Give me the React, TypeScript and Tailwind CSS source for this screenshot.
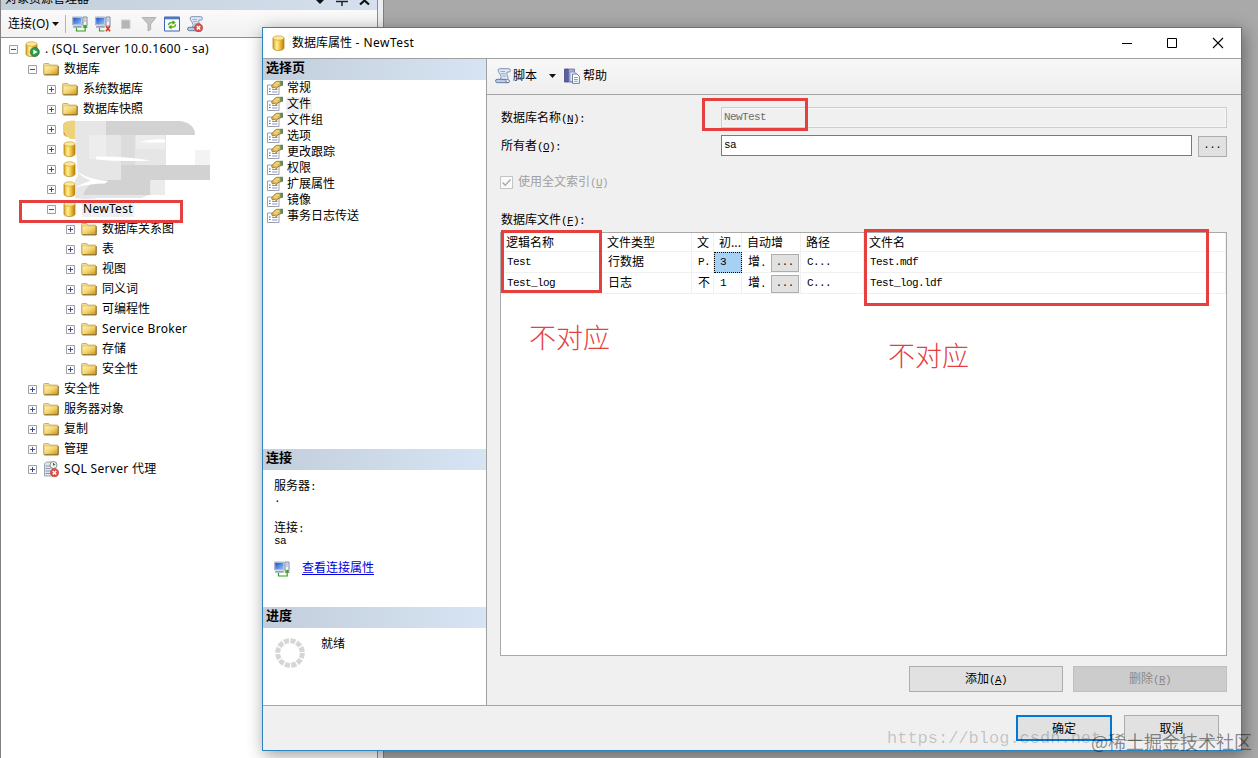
// App.tsx
import { Fragment } from 'react';
import type { ReactNode } from 'react';

type IconKind = 'server' | 'folder' | 'db' | 'agent';

interface TreeNode {
  label: string;
  level: number;
  icon: IconKind;
  open?: boolean;
  selected?: boolean;
}

interface FileRow {
  name: string;
  type: string;
  group: string;
  size: string;
  fileName: string;
  active?: boolean;
}

const TREE: TreeNode[] = [
  { label: '. (SQL Server 10.0.1600 - sa)', level: 0, icon: 'server', open: true },
  { label: '数据库', level: 1, icon: 'folder', open: true },
  { label: '系统数据库', level: 2, icon: 'folder' },
  { label: '数据库快照', level: 2, icon: 'folder' },
  { label: '', level: 2, icon: 'db' },
  { label: '', level: 2, icon: 'db' },
  { label: '', level: 2, icon: 'db' },
  { label: '', level: 2, icon: 'db' },
  { label: 'NewTest', level: 2, icon: 'db', open: true, selected: true },
  { label: '数据库关系图', level: 3, icon: 'folder' },
  { label: '表', level: 3, icon: 'folder' },
  { label: '视图', level: 3, icon: 'folder' },
  { label: '同义词', level: 3, icon: 'folder' },
  { label: '可编程性', level: 3, icon: 'folder' },
  { label: 'Service Broker', level: 3, icon: 'folder' },
  { label: '存储', level: 3, icon: 'folder' },
  { label: '安全性', level: 3, icon: 'folder' },
  { label: '安全性', level: 1, icon: 'folder' },
  { label: '服务器对象', level: 1, icon: 'folder' },
  { label: '复制', level: 1, icon: 'folder' },
  { label: '管理', level: 1, icon: 'folder' },
  { label: 'SQL Server 代理', level: 1, icon: 'agent' },
];

const INDENT = ['pl-2', 'pl-[27px]', 'pl-[46px]', 'pl-[65px]'];

const PAGES = ['常规', '文件', '文件组', '选项', '更改跟踪', '权限', '扩展属性', '镜像', '事务日志传送'];

const FILES: FileRow[] = [
  { name: 'Test', type: '行数据', group: 'P.', size: '3', fileName: 'Test.mdf', active: true },
  { name: 'Test_log', type: '日志', group: '不', size: '1', fileName: 'Test_log.ldf' },
];

const COLUMNS = 'grid grid-cols-[101px_90px_22px_28px_59px_63px_344px_1fr]';
const UI_FONT = "font-['Noto_Sans','Noto_Sans_CJK_SC',sans-serif]";
const MONO_FONT = "font-['Liberation_Mono','Noto_Sans_CJK_SC',monospace]";
const LATIN = 'text-[11px] tracking-[-0.6px]';

/* アイコン */
const Gradients = () => (
  <svg className="absolute w-0 h-0">
    <defs>
      <linearGradient id="gold" x1="0" x2="1">
        <stop offset="0" stopColor="#d9a520" />
        <stop offset="0.35" stopColor="#fff0a0" />
        <stop offset="0.65" stopColor="#efbf35" />
        <stop offset="1" stopColor="#b87a08" />
      </linearGradient>
      <linearGradient id="folder" x1="0" y1="0" x2="1" y2="1">
        <stop offset="0" stopColor="#fdf3b8" />
        <stop offset="0.5" stopColor="#f3d46c" />
        <stop offset="1" stopColor="#d08e14" />
      </linearGradient>
      <linearGradient id="screen" x1="0" y1="0" x2="1" y2="1">
        <stop offset="0" stopColor="#1f4fc4" />
        <stop offset="1" stopColor="#8fc2ff" />
      </linearGradient>
    </defs>
  </svg>
);

const Cylinder = () => (
  <g>
    <path d="M2 3v10c0 1.400 2.200 2.500 5.500 2.500s5.500-1.100 5.500-2.500V3z" fill="url(#gold)" stroke="#b98a1c" strokeWidth="0.8" />
    <ellipse cx="7.5" cy="3" rx="5.500" ry="2.200" fill="#fbe79a" stroke="#d3a83a" strokeWidth="0.8" />
  </g>
);

const RedCross = () => (
  <g>
    <circle cx="11.5" cy="11.8" r="4.2" fill="#d8504c" stroke="#b83a3a" strokeWidth="0.6" />
    <path d="M9.8 10.1l3.4 3.4M13.2 10.1l-3.4 3.4" stroke="#fff" strokeWidth="1.4" />
  </g>
);

const DbIcon = ({ className = 'w-4 h-4' }: { className?: string }) => (
  <svg viewBox="0 0 16 16" className={className}><Cylinder /></svg>
);

const FolderIcon = () => (
  <svg viewBox="0 0 16 16" className="w-4 h-4">
    <path d="M.6 13.2V3.4q0-.9.9-.9h4.2l1.3 1.600h7.400v9.100z" fill="#f3dc90" stroke="#bda25a" strokeWidth="0.8" />
    <path d="M1.200 5h13.900v8.600H1.200z" fill="url(#folder)" stroke="#d3ad55" strokeWidth="0.5" />
    <path d="M15.200 5v8.900H1.400" fill="none" stroke="#6e5214" strokeWidth="0.9" />
  </svg>
);

const ServerIcon = () => (
  <svg viewBox="0 0 16 16" className="w-4 h-4">
    <Cylinder />
    <circle cx="10.8" cy="11" r="4.6" fill="#2f9a4a" stroke="#1f6d35" strokeWidth="0.6" />
    <path d="M9.3 8.4v5.2l4.2-2.6z" fill="#fff" />
  </svg>
);

const AgentIcon = () => (
  <svg viewBox="0 0 16 16" className="w-4 h-4">
    <path d="M1.500 2.500l2-1.500h6v13l-1.500 1H1.500z" fill="#dfe5ec" stroke="#8793a2" strokeWidth="0.8" />
    <path d="M2.500 5h5M2.500 7.500h5M2.500 10h5M2.500 12.500h5" stroke="#8793a2" strokeWidth="0.9" />
    <circle cx="10.500" cy="4" r="3.500" fill="#eef5f2" stroke="#777" strokeWidth="0.8" />
    <path d="M10.500 2v2.200l1.800-1" fill="none" stroke="#364" strokeWidth="1" />
    <RedCross />
  </svg>
);

const ConnectIcon = ({ off = false }: { off?: boolean }) => (
  <svg viewBox="0 0 16 16" className="w-4 h-4">
    <path d="M.5 1h9.500v8H.5z" fill="#dfe6f0" stroke="#9aa7ba" strokeWidth="0.8" />
    <path d="M1.200 1.800h8v6.500h-8z" fill="url(#screen)" />
    <path d="M1.500 10h8.500l-.5 1.800H.8z" fill="#93a3bd" />
    <path d="M11 1h4v9h-4z" fill="#f3f5f8" stroke="#6e7c94" strokeWidth="0.9" />
    <path d="M12 3h2M12 5h2" stroke="#8a96aa" strokeWidth="0.8" />
    <path d={off ? 'M4.500 12v3h5' : 'M4.500 12v3h8.700v-4'} fill="none" stroke="#35a01c" strokeWidth="1.2" />
    {off
      ? <path d="M11 10.300l4 5M15 10.300l-4 5" stroke="#e0301c" strokeWidth="1.6" />
      : <path d="M10.500 11.800l2.700-3.400 2.700 3.400z" fill="#35a01c" />}
  </svg>
);

const ScrollIcon = ({ stopped = false }: { stopped?: boolean }) => (
  <svg viewBox="0 0 16 16" className="w-4 h-4">
    <path d="M4.500.7h9q2 0 2 1.600t-1.500 1.700h-2q-.8 1.500.4 3.500 1 2 .4 4H5.500Q7 8.500 5 6 2.800 3.500 3.200 2 3.500.7 4.500.7z" fill="#dfe8f5" stroke="#7488ae" strokeWidth="0.9" />
    <path d="M2 11.300h8.500q.3 3.400 2.500 3.400H2.500Q.6 14.700.6 13t1.400-1.700z" fill="#bccbe4" stroke="#5a6f9b" strokeWidth="0.9" />
    <path d="M12.800 11.500q1.700.2 1.700 1.700t-1.500 1.500" fill="none" stroke="#5a6f9b" strokeWidth="0.9" />
    <path d="M5.500 3.500h4.500M6.200 5.700h4.500M7.200 8h4" stroke="#8da0c6" strokeWidth="0.9" />
    {stopped && <RedCross />}
  </svg>
);

const RefreshIcon = () => (
  <svg viewBox="0 0 16 16" className="w-4 h-4">
    <path d="M.5 1h15v14H.5z" fill="#f7fbff" stroke="#3d62ac" />
    <path d="M.5 1h15v2.300H.5z" fill="#4d78c8" />
    <path d="M4.500 9.300q0-2.800 3.500-2.800h1.500M11.500 8.300q0 2.800-3.500 2.800H6.500" fill="none" stroke="#5fae14" strokeWidth="1.500" />
    <path d="M8.500 4.200l3.200 2.300-3.200 2.300zM7.500 8.800l-3.200 2.300 3.200 2.300z" fill="#4fa012" />
  </svg>
);

const HelpIcon = () => (
  <svg viewBox="0 0 16 16" className="w-4 h-4">
    <path d="M.5 1h4v13h-4z" fill="#5b5da6" stroke="#43467f" strokeWidth="0.8" />
    <path d="M4.500 1h6v13h-6z" fill="#a9aed8" stroke="#5b5f99" strokeWidth="0.7" />
    <path d="M6 4h4.500l2 2v7.500H6z" fill="#eaf0fa" stroke="#7584a8" strokeWidth="0.8" />
    <path d="M8.500 6h4.500l2.400 2.400v7H8.500z" fill="#fff" stroke="#4c5f8d" strokeWidth="0.8" />
    <path d="M10 9.500h3.800M10 11.500h3.800M10 13.300h3.800" stroke="#6d86bd" strokeWidth="0.8" />
  </svg>
);

const PageIcon = () => (
  <svg viewBox="0 0 16 16" className="w-4 h-4">
    <path d="M.5 5h11.500v9.500H.5z" fill="#fff" stroke="#8b95aa" strokeWidth="0.9" />
    <path d="M2 9h1.500M2 11.500h1.500" stroke="#3355a0" />
    <path d="M5 9.500h5.500M5 12h5.500" stroke="#8d94b0" />
    <path d="M4.500 6l3.500-3.800q1-.9 2.500-.9H14v4.500L11 6.500 9.500 8.800 7.500 7.500 5.500 8z" fill="#dfb84c" stroke="#7d651d" strokeWidth="0.7" />
    <path d="M8.500 3h3.500M7 5h3.500" stroke="#fff0a8" strokeWidth="0.9" />
    <path d="M13.500.8H16v5h-2.500z" fill="#5a8a63" />
  </svg>
);

const Spinner = () => (
  <svg viewBox="0 0 32 32" className="w-8 h-8">
    <circle cx="16" cy="16" r="12.300" fill="none" stroke="#d6d6d6" strokeWidth="5" strokeDasharray="5.040 1.400" />
  </svg>
);

const NODE_ICONS: Record<IconKind, ReactNode> = {
  server: <ServerIcon />,
  folder: <FolderIcon />,
  db: <DbIcon />,
  agent: <AgentIcon />,
};

const Expander = ({ open }: { open?: boolean }) => (
  <svg viewBox="0 0 9 9" className="w-[9px] h-[9px] shrink-0">
    <path d="M.5.5h8v8h-8z" fill="#fafafa" stroke="#a0a0a0" />
    <path d={open ? 'M2 4.500h5' : 'M2 4.500h5M4.500 2v5'} stroke="#3b4c94" />
  </svg>
);

const Caret = () => (
  <svg viewBox="0 0 7 4" className="w-[7px] h-1"><path d="M0 0h7L3.500 4z" fill="#111" /></svg>
);

/* 対象エクスプローラー */
const ObjectExplorer = () => (
  <aside className={`w-[384px] h-full flex bg-[#eceef1] border-l border-[#808080] border-r-[#808080] border-r ${UI_FONT}`}>
    <div className="w-[377px] flex flex-col border-r border-[#8a8d92] bg-white">
      <div className="h-[10px] overflow-hidden bg-gradient-to-r from-[#c3cedb] to-[#d5e0ee] flex justify-between pr-[6px]">
        <span className="text-xs leading-[16px] -mt-[9px] ml-1">对象资源管理器</span>
        <svg viewBox="0 0 56 10" className="w-14 h-[10px]">
          <path d="M1 0h8L5 4z" fill="#111" />
          <path d="M21 1.500h12M27 1v5" stroke="#222" strokeWidth="1.500" />
          <path d="M45 4.500l9-8M54 4.500l-9-8" stroke="#111" strokeWidth="2.200" />
        </svg>
      </div>
      <div className="h-7 flex items-center border-b border-[#8f8f8f] bg-gradient-to-b from-[#fafafa] to-[#f1f1f1] pl-[7px]">
        <span className="text-xs whitespace-nowrap w-11 tracking-[0.1px]">连接(O)</span>
        <Caret />
        <span className="w-px h-[18px] bg-[#b5b5b5] ml-[6px] mr-[6px]" />
        <div className="flex gap-[7px]">
          <ConnectIcon />
          <ConnectIcon off />
          <svg viewBox="0 0 16 16" className="w-4 h-4"><path d="M3.500 4h8.500v8.500H3.500z" fill="#b5b5b5" stroke="#cfcfcf" /></svg>
          <svg viewBox="0 0 16 16" className="w-4 h-4"><path d="M1 1.500h14L9.700 8v5.500L7 15V8z" fill="#c4c4c4" stroke="#aaa" strokeWidth="0.8" /></svg>
          <RefreshIcon />
          <ScrollIcon stopped />
        </div>
      </div>
      <div className="relative flex-1 pt-px">
        {TREE.map((node, i) => (
          <div key={i} className={`h-5 flex items-center ${INDENT[node.level]}`}>
            <Expander open={node.open} />
            <span className="ml-[6px] w-[18px] shrink-0">{NODE_ICONS[node.icon]}</span>
            <span className={`text-xs leading-4 whitespace-nowrap ml-[2px] px-px ${/[a-z]/.test(node.label) ? 'tracking-[0.3px]' : ''} ${node.selected ? 'bg-[#f0f0f0]' : ''}`}>
              {node.label}
            </span>
          </div>
        ))}
        <Mosaic />
      </div>
    </div>
  </aside>
);

/* 隠されたデータベース名のモザイク */
const Mosaic = () => (
  <svg viewBox="0 0 160 82" className="absolute left-[60px] top-[80px] w-[160px] h-[82px]">
    <path d="M3 6q5-5 12-3v18H9q-9-7-6-15z" fill="#efd27c" />
    <path d="M14 3h106q14 3 14 14h-29v30h44v15H104v15H88l-8 3H38q-14 2-24 0V62l3-4-3-40z" fill="#e6e6e7" />
    <path d="M45 3h75q14 3 14 14H45z" fill="#d2d2d3" />
    <path d="M60 17h14v30H60z" fill="#dcdcdd" />
    <path d="M28 17h17v24H28zM75 17h29v14H75z" fill="#ededed" />
    <path d="M134 32h15v15h-15z" fill="#f3f3f3" />
    <path d="M60 47h89v15H60z" fill="#d2d2d3" />
    <path d="M36 62h53v15H22q2-8 14-15z" fill="#d2d2d3" />
    <path d="M90 62h14v15H90z" fill="#ebebeb" />
    <path d="M35 38.500q27-.5 55 4-30 1.500-55-1zM78 24q12-3.500 26-2.500v3q-12 .5-26-.5zM17 54q12 8 30 9l-3 2.500q-14 0-30 4 8-4 16-7-9-3-13-8.500z" fill="#fff" />
  </svg>
);

const SectionHeader = ({ title }: { title: string }) => (
  <div className="h-[21px] bg-gradient-to-r from-[#c2cedb] to-[#d7e4f3] text-[13px] font-bold leading-5 pl-[3px]">{title}</div>
);

/* 左側ナビゲーション */
const DialogSidebar = () => (
  <div className="w-[224px] shrink-0 flex flex-col bg-white border-r border-[#a0a0a0]">
    <div className="h-[390px]">
      <SectionHeader title="选择页" />
      {PAGES.map((page) => (
        <div key={page} className="h-4 flex items-center pl-1">
          <PageIcon />
          <span className={`text-xs leading-[15px] pt-px translate-y-px ml-[3px] px-px ${page === '文件' ? 'bg-[#f0f0f0]' : ''}`}>{page}</span>
        </div>
      ))}
    </div>
    <div className="h-[158px]">
      <SectionHeader title="连接" />
      <div className="pl-[11px] pt-[9px] text-xs leading-4">
        <div>服务器<span className={LATIN}>:</span></div>
        <div className={`${LATIN} leading-[10px] -mt-px`}>.</div>
        <div className="mt-[17px]">连接<span className={LATIN}>:</span></div>
        <div className={`${LATIN} leading-[10px] -mt-px`}>sa</div>
        <div className="flex items-center mt-[15px]">
          <ConnectIcon />
          <a className="ml-3 text-[#0000e0] underline underline-offset-2">查看连接属性</a>
        </div>
      </div>
    </div>
    <SectionHeader title="进度" />
    <div className="flex pl-[11px] pt-[9px]">
      <Spinner />
      <span className="ml-[15px] text-xs leading-4">就绪</span>
    </div>
  </div>
);

const Label = ({ text, hotkey, colon = true }: { text: string; hotkey: string; colon?: boolean }) => (
  <span className="whitespace-nowrap relative top-px">
    {text}
    <span className={LATIN}>(<u className="underline-offset-1">{hotkey}</u>){colon && ':'}</span>
  </span>
);

const Ellipsis = ({ className }: { className: string }) => (
  <button className={`bg-[#e1e1e1] border border-[#adadad] text-[10px] leading-none shrink-0 ${className}`}>...</button>
);

/* ファイル一覧 */
const FileTable = () => (
  <div className="h-[424px] bg-white border border-[#a9a9a9] text-xs">
    <div className={`${COLUMNS} h-[19px] leading-[18px] border-b border-[#f0f0f0] whitespace-nowrap`}>
      {['逻辑名称', '文件类型', '文', '初...', '自动增', '路径', '文件名', ''].map((title, i) => (
        <div key={i} className="pl-[5px] border-r border-[#f0f0f0] overflow-hidden font-['Noto_Sans_CJK_SC',sans-serif]">{title}</div>
      ))}
    </div>
    {FILES.map((file) => (
      <div key={file.name} className={`${COLUMNS} h-[21px] leading-5 border-b border-[#f0f0f0] whitespace-nowrap *:border-r *:border-[#f0f0f0] *:pl-[6px]`}>
        <div className={LATIN}>{file.name}</div>
        <div className="pt-px">{file.type}</div>
        <div className={file.group === '不' ? 'pt-px' : LATIN}>{file.group}</div>
        {file.active
          ? <div className={`${LATIN} bg-[#a6d1f3] border border-dotted !border-black leading-[18px] h-[21px] !pl-[5px]`}>{file.size}</div>
          : <div className={LATIN}>{file.size}</div>}
        <div className="flex items-center">
          <span>增<span className={LATIN}>.</span></span>
          <Ellipsis className="w-7 h-[18px] ml-[5px]" />
        </div>
        <div className={LATIN}>C...</div>
        <div className={LATIN}>{file.fileName}</div>
        <div />
      </div>
    ))}
  </div>
);

const FilesPage = () => (
  <div className="flex-1 flex flex-col">
    <div className="h-9 flex items-center border-b border-[#a5a5a5] bg-gradient-to-b from-[#f8f8f8] to-[#eeeeee] pl-2 pb-[2px] text-xs">
      <ScrollIcon />
      <span className="ml-[2px] mr-3 mt-[2px]">脚本</span>
      <Caret />
      <span className="ml-2"><HelpIcon /></span>
      <span className="ml-[3px] mt-[2px]">帮助</span>
    </div>
    <div className="pl-[13px] pr-[14px] pt-3 text-xs">
      <div className="flex items-center h-[21px]">
        <div className="w-[221px] pl-px"><Label text="数据库名称" hotkey="N" /></div>
        <div className={`${LATIN} flex-1 h-[21px] border border-[#cccccc] shadow-[inset_0_0_0_1px_#f8f8f8] leading-[18px] pl-[2px] text-[#6d6d6d]`}>NewTest</div>
      </div>
      <div className="flex items-center h-[21px] mt-[7px]">
        <div className="w-[221px] pl-px"><Label text="所有者" hotkey="O" /></div>
        <div className={`${LATIN} flex-1 h-[21px] border border-[#7a7a7a] bg-white leading-[18px] pl-[2px]`}>sa</div>
        <Ellipsis className="w-[29px] h-[21px] ml-[6px] mt-px" />
      </div>
      <div className="flex items-center h-4 mt-[18px] text-[#a0a0a0]">
        <svg viewBox="0 0 13 13" className="w-[13px] h-[13px] mr-[5px]">
          <path d="M.5.5h12v12H.5z" fill="#fafafa" stroke="#c4c4c4" />
          <path d="M2.500 6.500l2.800 2.800L10.500 3.500" fill="none" stroke="#a8a8a8" strokeWidth="1.400" />
        </svg>
        <Label text="使用全文索引" hotkey="U" colon={false} />
      </div>
      <div className="h-4 leading-4 mt-[22px] mb-1 pl-px"><Label text="数据库文件" hotkey="F" /></div>
      <FileTable />
      <div className="flex justify-end gap-[10px] mt-[10px]">
        <button className="w-[154px] h-[26px] bg-[#e1e1e1] border border-[#adadad]"><Label text="添加" hotkey="A" colon={false} /></button>
        <button className="w-[154px] h-[26px] bg-[#cccccc] border border-[#bfbfbf] text-[#8a8a8a]"><Label text="删除" hotkey="R" colon={false} /></button>
      </div>
    </div>
  </div>
);

const PropertiesDialog = () => (
  <section className={`absolute left-[262px] top-[27px] w-[980px] h-[724px] flex flex-col bg-[#f0f0f0] border border-[#2a84bd] shadow-[2px_4px_16px_rgba(0,0,0,0.4)] ${MONO_FONT}`}>
    <header className={`h-[31px] shrink-0 flex items-center bg-white border-b border-[#a0a0a0] ${UI_FONT}`}>
      <DbIcon className="w-4 h-4 ml-2" />
      <span className="ml-[5px] text-xs flex-1">数据库属性<span className="tracking-[0.45px]"> - NewTest</span></span>
      <svg viewBox="0 0 104 12" className="w-[104px] h-3 mr-[16px]">
        <path d="M1 6.500h10M46.500 1.500h9v9h-9z" fill="none" stroke="#000" />
        <path d="M92 1l10 10M102 1L92 11" stroke="#000" strokeWidth="1.100" />
      </svg>
    </header>
    <div className="h-[647px] flex border-b border-[#a5a5a5]">
      <DialogSidebar />
      <FilesPage />
    </div>
    <footer className="flex-1 flex justify-end gap-3 pr-[22px] pt-[9px] text-xs">
      <button className="w-24 h-[26px] bg-[#e1e1e1] border-2 border-[#0078d7] pt-[3px]">确定</button>
      <button className="w-[95px] h-[26px] bg-[#e1e1e1] border border-[#adadad] pt-[3px]">取消</button>
    </footer>
  </section>
);

/* 赤枠の注釈 */
const BOXES = [
  'left-[19px] top-[200px] w-[164px] h-[23px]',
  'left-[702px] top-[98px] w-[106px] h-[33px]',
  'left-[501px] top-[230px] w-[101px] h-[63px]',
  'left-[864px] top-[229px] w-[345px] h-[77px]',
];

const Annotations = () => (
  <Fragment>
    {BOXES.map((box) => (
      <div key={box} className={`absolute border-3 border-[#e5403d] ${box}`} />
    ))}
    <div className="absolute left-[529px] top-[319px] text-[27px] leading-9 font-light text-[#e5403d] font-['Noto_Sans_CJK_SC',sans-serif]">不对应</div>
    <div className="absolute left-[888px] top-[337px] text-[27px] leading-9 font-light text-[#e5403d] font-['Noto_Sans_CJK_SC',sans-serif]">不对应</div>
    <div className="absolute left-[887px] top-[727px] text-[17px] leading-6 text-black/20 font-['Liberation_Mono',monospace]">https://blog.csdn.net</div>
    <div className="absolute left-[1091px] top-[729px] text-[18px] leading-6 whitespace-nowrap text-black/45 font-['Noto_Sans_CJK_SC',sans-serif]">@稀土掘金技术社区</div>
  </Fragment>
);

const App = () => (
  <div className="relative w-[1258px] h-[758px] overflow-hidden bg-[#a9a9a9] text-black">
    <Gradients />
    <ObjectExplorer />
    <PropertiesDialog />
    <Annotations />
  </div>
);

export default App;
